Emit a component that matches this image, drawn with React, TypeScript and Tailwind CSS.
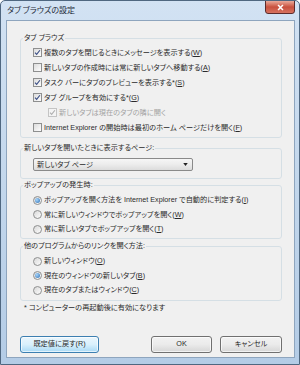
function Check({ checked, disabled }: { checked?: boolean; disabled?: boolean }) {
  return (
    <span
      className={`w-[9px] h-[9px] shrink-0 border flex items-center justify-center ${
        disabled ? 'border-[#c4c4c4] bg-[#f4f4f4]' : 'border-[#8e8f8f] bg-gradient-to-br from-[#dcdcdc] to-[#fdfdfd]'
      }`}
    >
      {checked && (
        <svg viewBox="0 0 9 9" className="w-[7px] h-[7px]">
          <path
            d="M1.3 4.6 L3.4 6.8 L7.6 1.6"
            stroke={disabled ? '#b0b0b0' : '#3b4f86'}
            strokeWidth="1.5"
            fill="none"
          />
        </svg>
      )}
    </span>
  )
}

function Radio({ checked }: { checked?: boolean }) {
  return (
    <span className="w-[9px] h-[9px] shrink-0 rounded-full border border-[#8e8f8f] bg-gradient-to-br from-[#d8d8d8] to-[#fdfdfd] flex items-center justify-center">
      {checked && (
        <span className="w-[5px] h-[5px] rounded-full bg-[radial-gradient(circle_at_35%_35%,#a9d6fb,#2d6fb3)]" />
      )}
    </span>
  )
}

function Key({ k }: { k: string }) {
  return (
    <>
      (<span className="underline">{k}</span>)
    </>
  )
}

function Row({ children, control, indent }: { children: React.ReactNode; control: React.ReactNode; indent?: boolean }) {
  return (
    <div className={`h-[15px] flex items-center gap-[2px] ${indent ? 'pl-[27px]' : 'pl-[12px]'}`}>
      {control}
      <span className="whitespace-nowrap">{children}</span>
    </div>
  )
}

function RRow({ children, checked }: { children: React.ReactNode; checked?: boolean }) {
  return (
    <div className="h-[14.5px] flex items-center gap-[2px] pl-[12px]">
      <Radio checked={checked} />
      <span className="whitespace-nowrap">{children}</span>
    </div>
  )
}

function Legend({ children }: { children: React.ReactNode }) {
  return <legend className="ml-[2px] px-[1px] leading-[10px] h-[10px]">{children}</legend>
}

export default function App() {
  return (
    <div className="w-[300px] h-[365px] flex flex-col bg-gradient-to-b from-[#d2e2f3] via-[#c3d7ec] to-[#b4cce6] border border-[#4f6780] rounded-t-[5px] overflow-hidden text-[#2a2a2a] font-['Liberation_Sans','Noto_Sans_CJK_JP',sans-serif] [font-feature-settings:'palt']">
      {/* title bar */}
      <div className="h-[19px] shrink-0 flex justify-between">
        <span className="pl-[6px] pt-[3px] text-[8px] leading-[12px] text-[#1d2a38] font-['Noto_Sans_CJK_JP',sans-serif]">タブ ブラウズの設定</span>
        <div className="mr-[4px] -mt-[1px] w-[30px] h-[14px] rounded-b-[3px] border border-[#5b2b2b] bg-gradient-to-b from-[#e9a99a] via-[#c8503e] to-[#d7725f] flex items-center justify-center">
          <svg viewBox="0 0 10 10" className="w-[7px] h-[7px]">
            <path d="M1.5 1.5 L8.5 8.5 M8.5 1.5 L1.5 8.5" stroke="#fff" strokeWidth="2.2" />
          </svg>
        </div>
      </div>

      {/* client area */}
      <div className="flex-1 ml-[5px] mr-[4px] mb-[6px] border border-[#8ea5be] bg-[#f0f0f0] pl-[13px] pr-[12px] pt-[12px] text-[7.2px] leading-[10px]">
        <fieldset className="border border-[#d5dfe5] rounded-[3px] pt-[2px] pb-[2px]">
          <Legend>タブ ブラウズ</Legend>
          <Row control={<Check checked />}>
            複数のタブを閉じるときにメッセージを表示する<Key k="W" />
          </Row>
          <Row control={<Check />}>
            新しいタブの作成時には常に新しいタブへ移動する<Key k="A" />
          </Row>
          <Row control={<Check checked />}>
            タスク バーにタブのプレビューを表示する*<Key k="S" />
          </Row>
          <Row control={<Check checked />}>
            タブ グループを有効にする*<Key k="G" />
          </Row>
          <Row indent control={<Check checked disabled />}>
            <span className="text-[#a3a3a3]">新しいタブは現在のタブの隣に開く</span>
          </Row>
          <Row control={<Check />}>
            Internet Explorer の開始時は最初のホーム ページだけを開く<Key k="F" />
          </Row>
        </fieldset>

        <fieldset className="mt-[5px] border border-[#d5dfe5] rounded-[3px] pt-[5px] pb-[7px]">
          <Legend>新しいタブを開いたときに表示するページ:</Legend>
          <div className="ml-[12px] w-[160px] h-[13px] border border-[#8a8a8a] rounded-[2px] bg-gradient-to-b from-[#f6f6f6] via-[#ececec] to-[#dcdcdc] flex items-center justify-between pl-[3px] pr-[4px]">
            <span>新しいタブ ページ</span>
            <svg viewBox="0 0 6 4" className="w-[5px] h-[3px]">
              <path d="M0 0 H6 L3 4 Z" fill="#222" />
            </svg>
          </div>
        </fieldset>

        <fieldset className="mt-[1px] border border-[#d5dfe5] rounded-[3px] pt-[3px] pb-[1.5px]">
          <Legend>ポップアップの発生時:</Legend>
          <RRow checked>
            ポップアップを開く方法を Internet Explorer で自動的に判定する<Key k="I" />
          </RRow>
          <RRow>
            常に新しいウィンドウでポップアップを開く<Key k="W" />
          </RRow>
          <RRow>
            常に新しいタブでポップアップを開く<Key k="T" />
          </RRow>
        </fieldset>

        <fieldset className="mt-[2px] border border-[#d5dfe5] rounded-[3px] pt-[3px] pb-[2px]">
          <Legend>他のプログラムからのリンクを開く方法:</Legend>
          <RRow>
            新しいウィンドウ<Key k="O" />
          </RRow>
          <RRow checked>
            現在のウィンドウの新しいタブ<Key k="B" />
          </RRow>
          <RRow>
            現在のタブまたはウィンドウ<Key k="C" />
          </RRow>
        </fieldset>

        <p className="mt-[2px] pl-[4px] whitespace-nowrap">* コンピューターの再起動後に有効になります</p>

        <div className="mt-[23px] flex items-center">
          <button className="w-[79px] h-[17px] rounded-[3px] border border-[#3c7fb1] bg-gradient-to-b from-[#eaf6fd] via-[#d9f0fc] to-[#a7d9f5] shadow-[inset_0_0_0_1px_#ffffffaa]">
            既定値に戻す(R)
          </button>
          <div className="flex-1" />
          <button className="w-[61px] h-[17px] rounded-[3px] border border-[#707070] bg-gradient-to-b from-[#f2f2f2] via-[#ebebeb] to-[#d6d6d6] shadow-[inset_0_0_0_1px_#ffffffaa]">
            OK
          </button>
          <button className="ml-[8px] w-[62px] h-[17px] rounded-[3px] border border-[#707070] bg-gradient-to-b from-[#f2f2f2] via-[#ebebeb] to-[#d6d6d6] shadow-[inset_0_0_0_1px_#ffffffaa]">
            キャンセル
          </button>
        </div>
      </div>
    </div>
  )
}
